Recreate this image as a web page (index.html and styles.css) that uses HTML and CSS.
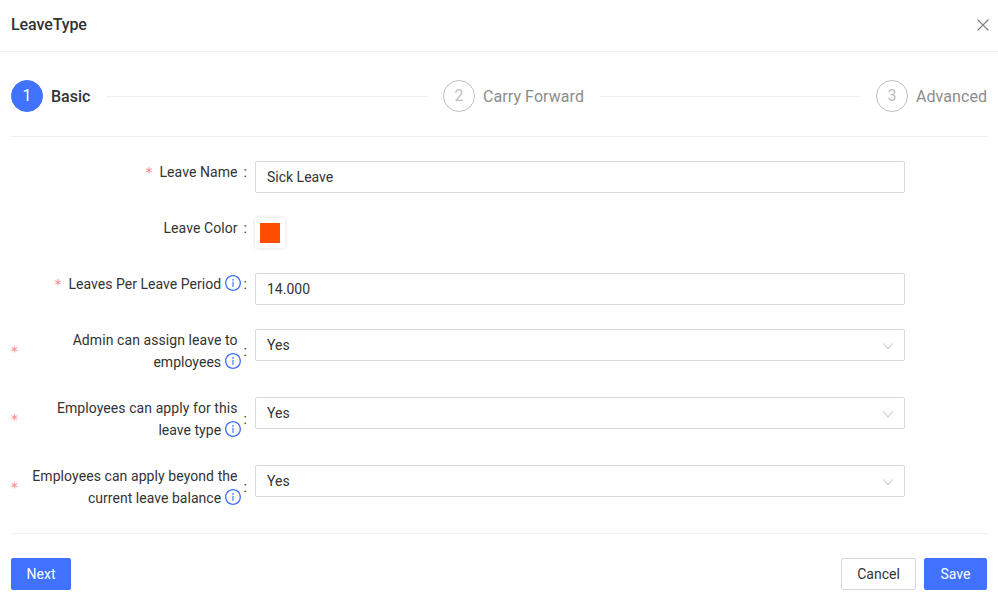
FILE: index.html
```html
<!DOCTYPE html>
<html lang="en">
<head>
<meta charset="utf-8">
<title>LeaveType</title>
<link rel="stylesheet" href="styles.css">
</head>
<body>
<header class="modal-header">
  <h1 class="modal-title">LeaveType</h1>
  <svg class="close-icon" width="12" height="12" viewBox="0 0 12 12"><path d="M.5.5l11 11M11.5.5l-11 11"/></svg>
</header>
<main class="modal-body">
  <ol class="steps">
    <li class="step step-active"><span class="step-num">1</span><span class="step-title">Basic</span><span class="step-tail"></span></li>
    <li class="step"><span class="step-num">2</span><span class="step-title">Carry Forward</span><span class="step-tail"></span></li>
    <li class="step"><span class="step-num">3</span><span class="step-title">Advanced</span></li>
  </ol>
  <hr class="divider">
  <form class="form">
    <div class="row">
      <div class="label"><span class="req">*</span><span class="text"><span class="line line-plain">Leave Name</span></span><span class="colon">:</span></div>
      <div class="control"><div class="input">Sick Leave</div></div>
    </div>
    <div class="row">
      <div class="label"><span class="text"><span class="line line-plain">Leave Color</span></span><span class="colon">:</span></div>
      <div class="control"><div class="swatch"><span class="swatch-color"></span></div></div>
    </div>
    <div class="row">
      <div class="label"><span class="req">*</span><span class="text"><span class="line">Leaves Per Leave Period <svg class="info" width="16" height="16" viewBox="64 64 896 896"><path d="M512 64C264.6 64 64 264.6 64 512s200.6 448 448 448 448-200.6 448-448S759.4 64 512 64zm0 820c-205.4 0-372-166.6-372-372s166.6-372 372-372 372 166.6 372 372-166.6 372-372 372z"/><path d="M464 336a48 48 0 1 0 96 0 48 48 0 1 0-96 0zm72 112h-48c-4.4 0-8 3.6-8 8v272c0 4.4 3.6 8 8 8h48c4.4 0 8-3.6 8-8V456c0-4.4-3.6-8-8-8z"/></svg></span></span><span class="colon">:</span></div>
      <div class="control"><div class="input">14.000</div></div>
    </div>
    <div class="row">
      <div class="label"><span class="req req-far">*</span><span class="text"><span class="line line-plain">Admin can assign leave to</span><span class="line">employees <svg class="info" width="16" height="16" viewBox="64 64 896 896"><path d="M512 64C264.6 64 64 264.6 64 512s200.6 448 448 448 448-200.6 448-448S759.4 64 512 64zm0 820c-205.4 0-372-166.6-372-372s166.6-372 372-372 372 166.6 372 372-166.6 372-372 372z"/><path d="M464 336a48 48 0 1 0 96 0 48 48 0 1 0-96 0zm72 112h-48c-4.4 0-8 3.6-8 8v272c0 4.4 3.6 8 8 8h48c4.4 0 8-3.6 8-8V456c0-4.4-3.6-8-8-8z"/></svg></span></span><span class="colon">:</span></div>
      <div class="control"><div class="input select">Yes<svg class="chevron" width="10" height="8" viewBox="0 0 10 8"><path d="M.4 1.4L5 7l4.6-5.6"/></svg></div></div>
    </div>
    <div class="row">
      <div class="label"><span class="req req-far">*</span><span class="text"><span class="line line-plain">Employees can apply for this</span><span class="line">leave type <svg class="info" width="16" height="16" viewBox="64 64 896 896"><path d="M512 64C264.6 64 64 264.6 64 512s200.6 448 448 448 448-200.6 448-448S759.4 64 512 64zm0 820c-205.4 0-372-166.6-372-372s166.6-372 372-372 372 166.6 372 372-166.6 372-372 372z"/><path d="M464 336a48 48 0 1 0 96 0 48 48 0 1 0-96 0zm72 112h-48c-4.4 0-8 3.6-8 8v272c0 4.4 3.6 8 8 8h48c4.4 0 8-3.6 8-8V456c0-4.4-3.6-8-8-8z"/></svg></span></span><span class="colon">:</span></div>
      <div class="control"><div class="input select">Yes<svg class="chevron" width="10" height="8" viewBox="0 0 10 8"><path d="M.4 1.4L5 7l4.6-5.6"/></svg></div></div>
    </div>
    <div class="row">
      <div class="label"><span class="req req-far">*</span><span class="text"><span class="line line-plain">Employees can apply beyond the</span><span class="line">current leave balance <svg class="info" width="16" height="16" viewBox="64 64 896 896"><path d="M512 64C264.6 64 64 264.6 64 512s200.6 448 448 448 448-200.6 448-448S759.4 64 512 64zm0 820c-205.4 0-372-166.6-372-372s166.6-372 372-372 372 166.6 372 372-166.6 372-372 372z"/><path d="M464 336a48 48 0 1 0 96 0 48 48 0 1 0-96 0zm72 112h-48c-4.4 0-8 3.6-8 8v272c0 4.4 3.6 8 8 8h48c4.4 0 8-3.6 8-8V456c0-4.4-3.6-8-8-8z"/></svg></span></span><span class="colon">:</span></div>
      <div class="control"><div class="input select">Yes<svg class="chevron" width="10" height="8" viewBox="0 0 10 8"><path d="M.4 1.4L5 7l4.6-5.6"/></svg></div></div>
    </div>
  </form>
  <hr class="divider">
  <footer class="actions">
    <button type="button" class="btn btn-primary btn-next">Next</button>
    <div class="actions-right">
      <button type="button" class="btn btn-cancel">Cancel</button>
      <button type="button" class="btn btn-primary btn-save">Save</button>
    </div>
  </footer>
</main>
</body>
</html>
```
FILE: styles.css
```css
* { box-sizing: border-box; }
html, body { margin: 0; padding: 0; background: #fff; }
body {
  font-family: Roboto, "Liberation Sans", sans-serif;
  font-size: 14px;
  line-height: 22px;
  color: #333;
  overflow: hidden;
}
.modal-header {
  height: 52px;
  padding: 0 9px 2px 11px;
  border-bottom: 1px solid #f0f0f0;
  display: flex;
  align-items: center;
  justify-content: space-between;
}
.modal-title { margin: 0; font-size: 16px; font-weight: 500; line-height: 22px; color: #333; letter-spacing: -.1px; }
.close-icon { fill: none; stroke: #808080; stroke-width: 1.1; }
.modal-body { padding: 28px 11px 0; }
.steps { display: grid; grid-template-columns: 432px 433px 111px; margin: 0; padding: 0; list-style: none; }
.step { display: flex; align-items: center; height: 32px; font-size: 16px; color: #8c8c8c; }
.step-num {
  width: 32px; height: 32px; border-radius: 50%;
  border: 1px solid #bfbfbf; color: #bfbfbf;
  display: flex; align-items: center; justify-content: center;
  margin-right: 8px; flex: none;
}
.step-active { color: #333; }
.step-active .step-title { font-weight: 500; letter-spacing: 0; }
.step-active .step-num { background: #4072ff; border-color: #4072ff; color: #fff; }
.step-title { white-space: nowrap; padding-top: 2px; letter-spacing: .08px; }
.step-tail { flex: 1; height: 1px; background: #f0f0f0; margin: 0 16px; }
.divider { border: 0; height: 1px; background: #f0f0f0; margin: 24px 0; }
.form { display: block; }
.row { display: grid; grid-template-columns: 244px 650px; margin-bottom: 24px; align-items: start; }
.row:last-child { margin-bottom: 0; }
.label { display: flex; align-items: center; justify-content: flex-end; }
.req { color: #ff7b8a; margin-right: 7px; font-family: "DejaVu Sans", sans-serif; font-size: 14px; }
.req-far { margin-right: auto; }
.text { display: block; text-align: right; }
.line { display: block; white-space: nowrap; letter-spacing: .03px; }
.line-plain { padding-right: 3px; letter-spacing: .08px; }
.colon { margin: 0 8px 0 3px; }
.info { fill: #4072ff; vertical-align: -2px; }
.input {
  height: 32px;
  border: 1px solid #d9d9d9;
  border-radius: 2px;
  padding: 4px 11px;
  background: #fff;
  display: flex;
  align-items: center;
  justify-content: space-between;
}
.chevron { fill: none; stroke: #bfbfbf; stroke-width: 1; margin-top: 2px; }
.select { padding-right: 11px; }
.swatch {
  width: 30px; height: 30px; padding: 5px; margin: 1px 0;
  background: #fff; border-radius: 3px;
  box-shadow: 0 0 4px rgba(0,0,0,.14);
}
.swatch-color { display: block; width: 20px; height: 20px; background: #ff4d00; }
.actions { display: flex; justify-content: space-between; }
.actions-right { display: flex; gap: 8px; }
.btn {
  height: 32px;
  padding: 4px 0;
  border: 1px solid #d9d9d9;
  border-radius: 2px;
  background: #fff;
  color: #333;
  font: inherit;
  box-shadow: 0 2px 0 rgba(0,0,0,.015);
}
.btn-next { width: 60px; }
.btn-cancel { width: 75px; }
.btn-save { width: 63px; }
.btn-primary { background: #4072ff; border-color: #4072ff; color: #fff; box-shadow: 0 2px 0 rgba(0,0,0,.045); }
```
